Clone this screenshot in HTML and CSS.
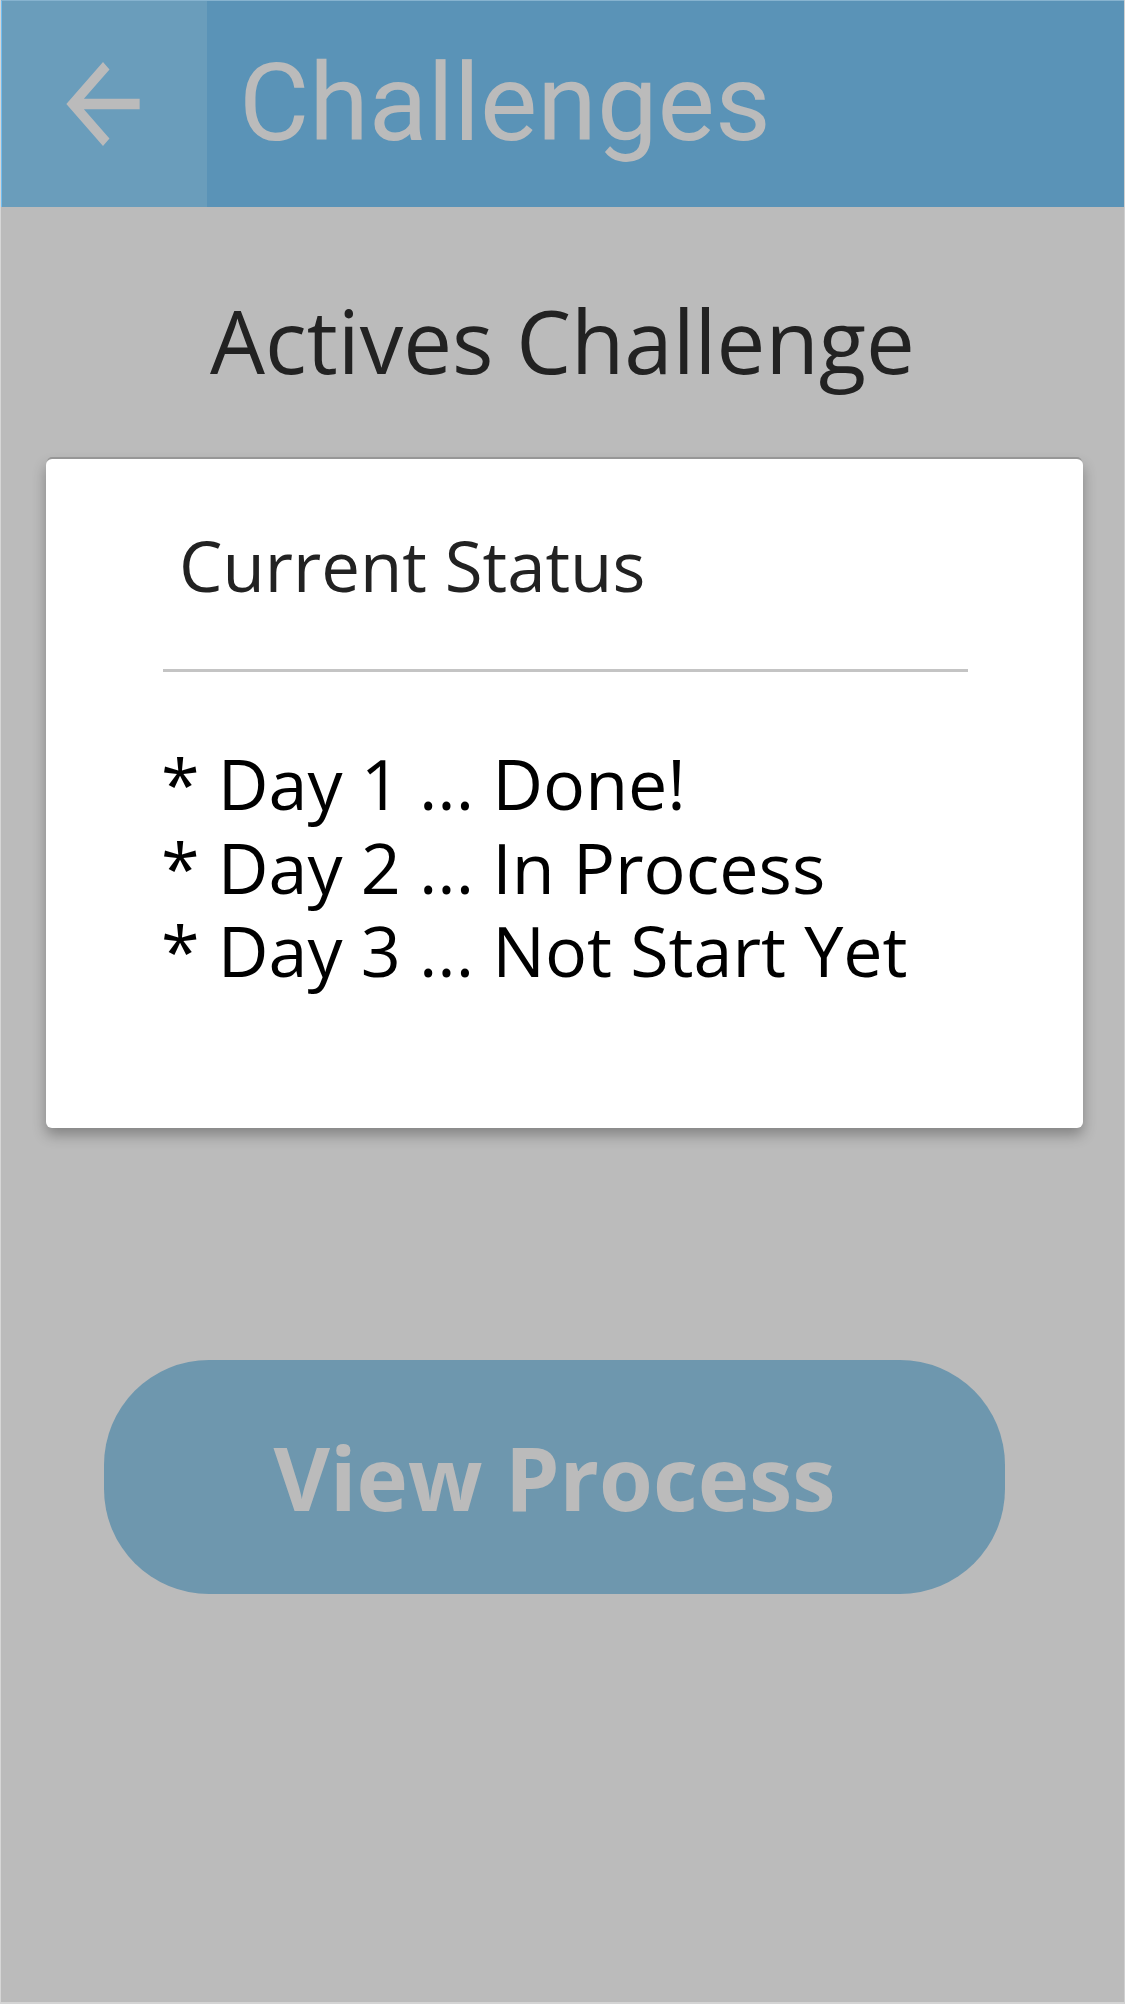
FILE: index.html
```html
<!DOCTYPE html>
<html lang="en">
<head>
<meta charset="utf-8">
<title>Challenges</title>
<link rel="stylesheet" href="styles.css">
</head>
<body>
<div class="app">
  <header class="topbar">
    <div class="back">
      <svg class="back-icon" viewBox="0 0 24 24" preserveAspectRatio="none" aria-hidden="true">
        <path d="M20 11H7.83l5.59-5.59L12 4l-8 8 8 8 1.41-1.41L7.83 13H20v-2z" fill="#bbbbbb"/>
      </svg>
    </div>
    <h1 class="topbar-title">Challenges</h1>
  </header>

  <h2 class="section-title">Actives Challenge</h2>

  <section class="card">
    <h3 class="card-title">Current Status</h3>
    <div class="card-divider"></div>
    <ul class="status-list">
      <li>* Day 1 ... Done!</li>
      <li>* Day 2 ... In Process</li>
      <li>* Day 3 ... Not Start Yet</li>
    </ul>
  </section>

  <div class="actions">
    <button class="primary-btn" type="button">View Process</button>
  </div>
</div>
</body>
</html>
```

FILE: styles.css
```css
* {
  box-sizing: border-box;
}

html, body {
  margin: 0;
  padding: 0;
}

body {
  background: #bbbbbb;
  font-family: "Open Sans", "Noto Sans", sans-serif;
}

.app {
  width: 1125px;
  height: 2004px;
  background: #bbbbbb;
  border-left: 1px solid #d6d6d6;
  border-right: 1px solid #d0d0d0;
  border-bottom: 2px solid #d4d4d4;
  display: flex;
  flex-direction: column;
  overflow: hidden;
}

.topbar {
  height: 207px;
  margin-left: -1px;
  display: flex;
  align-items: stretch;
  background: #5a93b7;
  border-top: 1px solid #86b3cf;
  border-left: 2px solid #72bdf0;
}

.back {
  width: 205px;
  flex: none;
  display: flex;
  align-items: center;
  justify-content: center;
  background: #6a9dbb;
}

.back-icon {
  width: 110px;
  height: 126px;
  display: block;
  margin-right: 4px;
}

.topbar-title {
  margin: 0 0 0 32px;
  font-family: Roboto, "Liberation Sans", sans-serif;
  font-weight: 400;
  font-size: 108px;
  line-height: 205px;
  color: #bbbbbb;
}

.section-title {
  margin: 73px 0 0;
  font-weight: 400;
  font-size: 87px;
  line-height: 120px;
  color: #222222;
  text-align: center;
}

.card {
  margin: 59px 41px 0 45px;
  background: #ffffff;
  border-radius: 6px;
  padding: 56px 0 135px 0;
  box-shadow: 0 -3px 0 -1px #979797, 0 7px 14px rgba(0, 0, 0, 0.3);
}

.card-title {
  margin: 0 0 0 133px;
  font-weight: 400;
  font-size: 69px;
  line-height: 100px;
  color: #222222;
}

.card-divider {
  height: 3px;
  margin: 54px 115px 0 117px;
  background: #c4c4c4;
}

.status-list {
  list-style: none;
  margin: 70px 0 0 115px;
  padding: 0;
  font-size: 70px;
  line-height: 83.5px;
  color: #000000;
}

.actions {
  margin-top: 232px;
  padding-left: 103px;
}

.primary-btn {
  width: 901px;
  height: 234px;
  border: none;
  border-radius: 105px;
  background: #6e97ae;
  color: #bbbbbb;
  font-family: "Open Sans", "Noto Sans", sans-serif;
  font-weight: 700;
  font-size: 87px;
  display: flex;
  align-items: center;
  justify-content: center;
  padding: 0;
}
```
